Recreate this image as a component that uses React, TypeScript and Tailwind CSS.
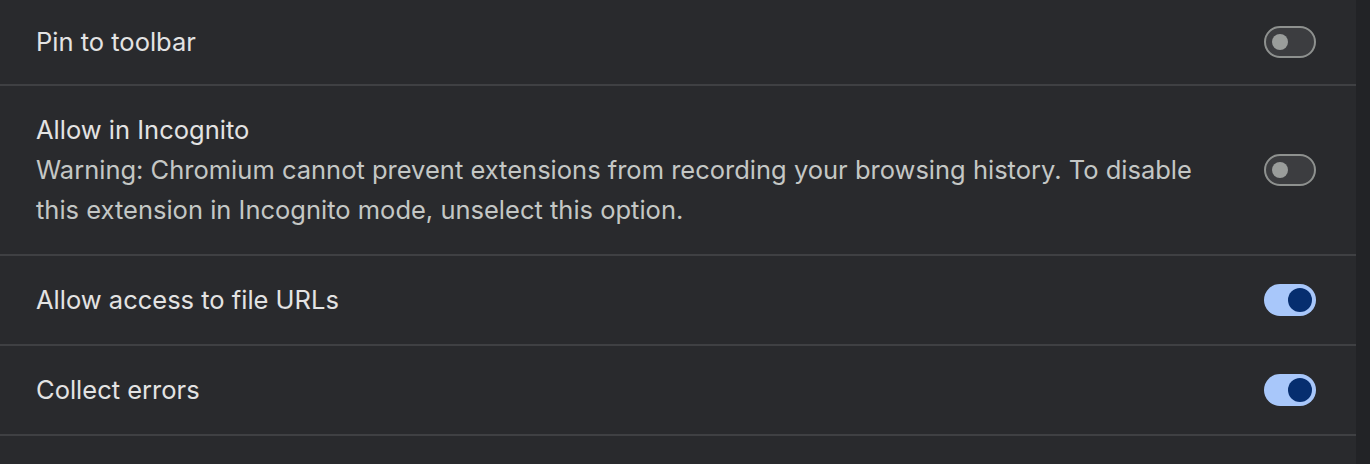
import { useState } from "react";

interface ToggleProps {
  checked: boolean;
  onChange: () => void;
}

function Toggle({ checked, onChange }: ToggleProps) {
  return (
    <button
      onClick={onChange}
      className={
        checked
          ? "w-[52px] h-[32px] rounded-full bg-[#a8c7fa] flex items-center justify-end pr-[4px] shrink-0"
          : "w-[52px] h-[32px] rounded-full bg-[#3c3d40] border-2 border-[#8e918f] flex items-center justify-start pl-[6px] shrink-0"
      }
    >
      <span
        className={
          checked
            ? "block w-[24px] h-[24px] rounded-full bg-[#062e6f]"
            : "block w-[16px] h-[16px] rounded-full bg-[#9a9d9b]"
        }
      />
    </button>
  );
}

export default function App() {
  const [pinned, setPinned] = useState(false);
  const [incognito, setIncognito] = useState(false);
  const [fileUrls, setFileUrls] = useState(true);
  const [collectErrors, setCollectErrors] = useState(true);

  return (
    <div
      className="w-[1370px] h-[464px] bg-[#222326] flex overflow-hidden"
      style={{ fontFamily: "Inter, 'Noto Sans', sans-serif" }}
    >
      <div className="w-[1356px] h-full bg-[#292a2d] flex flex-col">
        {/* Pin to toolbar */}
        <div className="h-[86px] shrink-0 flex items-center justify-between pl-[36px] pr-[40px] border-b-2 border-[#3f4043]">
          <span className="text-[25.5px] text-[#e3e3e3]">Pin to toolbar</span>
          <Toggle checked={pinned} onChange={() => setPinned(!pinned)} />
        </div>

        {/* Allow in Incognito */}
        <div className="h-[170px] shrink-0 flex items-center justify-between pl-[36px] pr-[40px] border-b-2 border-[#3f4043]">
          <div className="flex flex-col">
            <span className="text-[25.5px] leading-[40px] text-[#e3e3e3]">Allow in Incognito</span>
            <span className="text-[25.5px] leading-[40px] text-[#c4c7c5]">
              Warning: Chromium cannot prevent extensions from recording your browsing history. To disable
              <br />
              this extension in Incognito mode, unselect this option.
            </span>
          </div>
          <Toggle checked={incognito} onChange={() => setIncognito(!incognito)} />
        </div>

        {/* Allow access to file URLs */}
        <div className="h-[90px] shrink-0 flex items-center justify-between pl-[36px] pr-[40px] border-b-2 border-[#3f4043]">
          <span className="text-[25.5px] text-[#e3e3e3]">Allow access to file URLs</span>
          <Toggle checked={fileUrls} onChange={() => setFileUrls(!fileUrls)} />
        </div>

        {/* Collect errors */}
        <div className="h-[90px] shrink-0 flex items-center justify-between pl-[36px] pr-[40px] border-b-2 border-[#3f4043]">
          <span className="text-[25.5px] text-[#e3e3e3]">Collect errors</span>
          <Toggle checked={collectErrors} onChange={() => setCollectErrors(!collectErrors)} />
        </div>
      </div>
    </div>
  );
}
